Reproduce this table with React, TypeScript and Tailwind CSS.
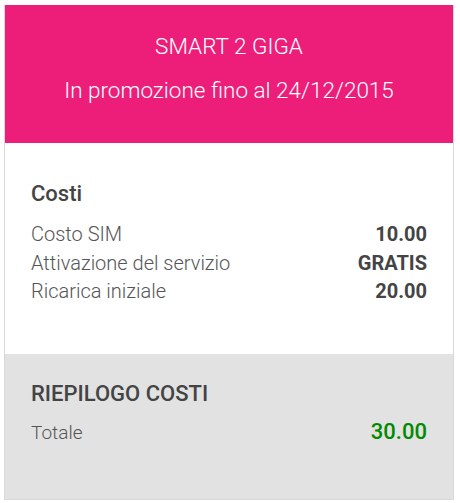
const rows = [
  { label: "Costo SIM", value: "10.00" },
  { label: "Attivazione del servizio", value: "GRATIS" },
  { label: "Ricarica iniziale", value: "20.00" },
];

export default function App() {
  return (
    <div className="min-h-[503px] bg-white pt-[5px] pl-1 font-['Roboto',sans-serif]">
      <div className="w-[450px] h-[495px] border border-t-0 border-[#d9d9d9] flex flex-col">
        {/* Header */}
        <div className="bg-[#ed1e79] text-white text-center font-light text-[22.5px] leading-[33px] pt-[25px] pb-[36px] flex flex-col gap-[11px]">
          <div>SMART 2 GIGA</div>
          <div>In promozione fino al 24/12/2015</div>
        </div>

        {/* Costi */}
        <div className="bg-white px-[26px] pt-[36px] h-[211px]">
          <h2 className="text-[22px] leading-[30px] font-medium text-[#444] mb-[11px]">Costi</h2>
          {rows.map(r => (
            <div key={r.label} className="flex justify-between text-[20px] leading-[28.5px] text-[#555]">
              <span className="font-light">{r.label}</span>
              <span className="font-bold text-[#444]">{r.value}</span>
            </div>
          ))}
        </div>

        {/* Riepilogo */}
        <div className="bg-[#e2e2e2] flex-1 px-[26px] pt-[25px]">
          <h2 className="text-[22px] leading-[30px] font-medium text-[#444] mb-[6px]">RIEPILOGO COSTI</h2>
          <div className="flex justify-between items-baseline">
            <span className="font-light text-[19px] text-[#555]">Totale</span>
            <span className="font-medium text-[22px] text-[#008a00]">30.00</span>
          </div>
        </div>
      </div>
    </div>
  );
}
